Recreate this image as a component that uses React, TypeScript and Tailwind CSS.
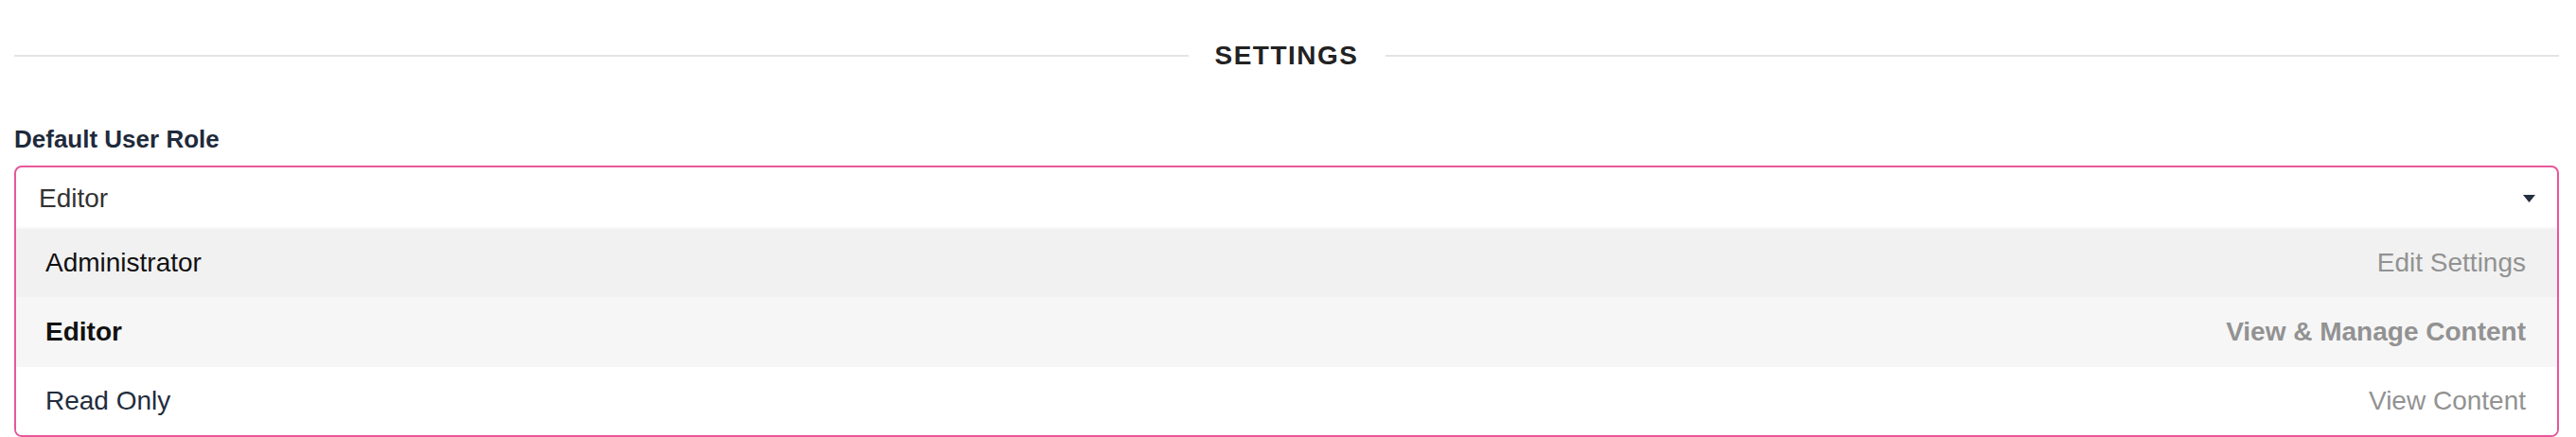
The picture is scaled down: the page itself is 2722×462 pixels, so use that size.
import React from "react";

const options = [
  { label: "Administrator", desc: "Edit Settings", bg: "bg-[#f1f1f1]", h: "h-[72px]", color: "text-[#111111]", selected: false },
  { label: "Editor", desc: "View & Manage Content", bg: "bg-[#f6f6f6]", h: "h-[74px]", color: "text-[#111111]", selected: true },
  { label: "Read Only", desc: "View Content", bg: "bg-white", h: "h-[72px]", color: "text-[#222d3d]", selected: false },
];

export default function App() {
  return (
    <div
      className="w-full h-[462px] overflow-hidden bg-white pl-[15px] pr-[18px] pt-[43px]"
      style={{ fontFamily: '"Liberation Sans", Arial, sans-serif' }}
    >
      <div className="flex items-center gap-[28px]">
        <div className="flex-1 h-[2px] bg-[#e4e4e4]" />
        <div className="text-[28px] leading-[32px] font-bold tracking-[1.5px] text-[#222222]">SETTINGS</div>
        <div className="flex-1 h-[2px] bg-[#e4e4e4]" />
      </div>

      <div className="mt-[57px] text-[26px] leading-[30px] font-bold text-[#1f2a3b]">Default User Role</div>

      <div className="mt-[13px] border-2 border-[#e8579a] rounded-[8px] overflow-hidden">
        <div className="h-[65px] flex items-center justify-between pl-[24px] pr-[23px]">
          <span className="text-[28px] leading-[32px] text-[#333333]">Editor</span>
          <svg width="13" height="8" viewBox="0 0 13 8" className="block">
            <path d="M0 0 H13 L6.5 8 Z" fill="#252f3f" />
          </svg>
        </div>
        <div className="shadow-[0_-1px_3px_rgba(0,0,0,0.06)]">
          {options.map((o) => (
            <div
              key={o.label}
              className={`${o.h} ${o.bg} flex items-center justify-between pl-[31px] pr-[33px]`}
            >
              <span className={`text-[28px] leading-[32px] ${o.color} ${o.selected ? "font-bold" : ""}`}>
                {o.label}
              </span>
              <span className={`text-[28px] leading-[32px] text-[#929292] ${o.selected ? "font-bold" : ""}`}>
                {o.desc}
              </span>
            </div>
          ))}
        </div>
      </div>
    </div>
  );
}
